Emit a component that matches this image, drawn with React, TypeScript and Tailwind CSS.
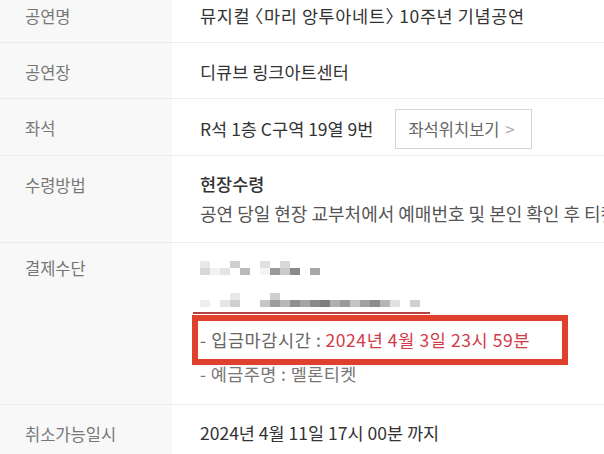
import React from "react"

const FONT = { fontFamily: '"Noto Sans CJK KR", "Noto Sans", sans-serif' }

// pixelated (mosaic) blocks covering the masked payment info
const MOSAIC_1 = ["#d8d8d8", "#f2f2f2", "#e4e4e4", "#fff", "#b9b9b9", "#fff", "#f4f4f4", "#9a9a9a", "#c9c9c9", "#8a8a8a", "#fff", "#a8a8a8"]
const MOSAIC_2 = [
  "#eee", "#fff", "#e6e6e6", "#d0d0d0", "#fff", "#fff", "#c6c6c6", "#9d9d9d", "#b8b8b8", "#8f8f8f",
  "#a5a5a5", "#8a8a8a", "#7d7d7d", "#b0b0b0", "#9a9a9a", "#c4c4c4", "#a1a1a1", "#8c8c8c", "#b6b6b6",
  "#e1e1e1", "#fff", "#d0d0d0",
]

function Mosaic({ cells, top }: { cells: string[]; top: string[] }) {
  return (
    <div className="flex flex-col blur-[0.6px]">
      <div className="flex">
        {top.map((c, i) => (
          <span key={i} className="block w-[10px] h-[7px]" style={{ backgroundColor: c }} />
        ))}
      </div>
      <div className="flex">
        {cells.map((c, i) => (
          <span key={i} className="block w-[10px] h-[7px]" style={{ backgroundColor: c }} />
        ))}
      </div>
    </div>
  )
}

function Row({
  label,
  children,
  className = "",
}: {
  label: string
  children: React.ReactNode
  className?: string
}) {
  return (
    <div className={`flex border-b border-[#ececec] ${className}`}>
      <div className="w-[172px] shrink-0 bg-[#f8f8f8] pl-[25px] pt-[17px] text-[16.5px] leading-[24px] text-[#777]">
        {label}
      </div>
      <div className="flex-1 min-w-0 pl-[28px]">{children}</div>
    </div>
  )
}

export default function App() {
  return (
    <div className="w-[604px] h-[454px] overflow-hidden bg-white" style={FONT}>
      <div className="-mt-[13px]">
        <Row label="공연명" className="h-[56px]">
          <div className="pt-[17px] text-[17.5px] leading-[24px] tracking-[0.6px] text-[#333] whitespace-nowrap [font-feature-settings:'halt']">
            뮤지컬 〈마리 앙투아네트〉 10주년 기념공연
          </div>
        </Row>

        <Row label="공연장" className="h-[56px]">
          <div className="pt-[17px] text-[17.5px] leading-[24px] text-[#333]">디큐브 링크아트센터</div>
        </Row>

        <Row label="좌석" className="h-[57px]">
          <div className="flex items-center gap-[22px] pt-[10px]">
            <span className="text-[17.5px] leading-[24px] text-[#333] whitespace-nowrap">R석 1층 C구역 19열 9번</span>
            <button className="flex items-center h-[40px] w-[137px] shrink-0 border border-[#d4d4d4] pl-[12px] text-[16.5px] text-[#666] whitespace-nowrap">
              좌석위치보기
              <span className="ml-[6px] text-[#aaa]">&gt;</span>
            </button>
          </div>
        </Row>

        <Row label="수령방법" className="h-[87px]">
          <div className="pt-[16px] overflow-hidden whitespace-nowrap">
            <div className="text-[17.5px] leading-[24px] font-medium text-[#333]">현장수령</div>
            <div className="mt-[5px] text-[18px] leading-[24px] text-[#555]">
              공연 당일 현장 교부처에서 예매번호 및 본인 확인 후 티켓을 수령하실 수 있습니다.
            </div>
          </div>
        </Row>

        <div className="flex border-b border-[#ececec] h-[162px]">
          <div className="w-[172px] shrink-0 bg-[#f8f8f8] pl-[25px] pt-[13px] text-[16.5px] leading-[24px] text-[#777]">
            결제수단
          </div>
          <div className="flex-1 min-w-0 pl-[28px] pt-[13px]">
            <div className="h-[24px] flex items-center">
              <Mosaic
                top={["#e9e9e9", "#fff", "#fff", "#cfcfcf", "#fff", "#fff", "#e0e0e0", "#fff", "#d8d8d8", "#fff", "#fff"]}
                cells={MOSAIC_1}
              />
            </div>
            <div className="mt-[8px] h-[24px] flex items-center">
              <Mosaic
                top={["#fff", "#fff", "#fff", "#e8e8e8", "#fff", "#fff", "#fff", "#cfcfcf", "#fff", "#fff", "#fff", "#fff", "#fff", "#fff", "#fff", "#fff", "#fff", "#fff", "#fff", "#fff", "#fff", "#fff"]}
                cells={MOSAIC_2}
              />
            </div>
            <div className="-ml-[7px] h-[2px] w-[237px] bg-[#b94040]" />
            <div className="relative z-10 -ml-[8px] mt-[1px] h-[50px] w-[376px] border-[6px] border-[#e0402c] flex items-center pl-[2px] text-[17.5px] tracking-[0.6px] whitespace-nowrap">
              <span className="text-[#666]">- 입금마감시간 : </span>
              <span className="ml-[4px] text-[#d33a48]">2024년 4월 3일 23시 59분</span>
            </div>
            <div className="-mt-[3px] text-[17.5px] leading-[24px] tracking-[0.4px] text-[#777] whitespace-nowrap">- 예금주명 : 멜론티켓</div>
          </div>
        </div>

        <Row label="취소가능일시" className="h-[60px]">
          <div className="pt-[16px] text-[17.5px] leading-[24px] text-[#333]">2024년 4월 11일 17시 00분 까지</div>
        </Row>
      </div>
    </div>
  )
}
